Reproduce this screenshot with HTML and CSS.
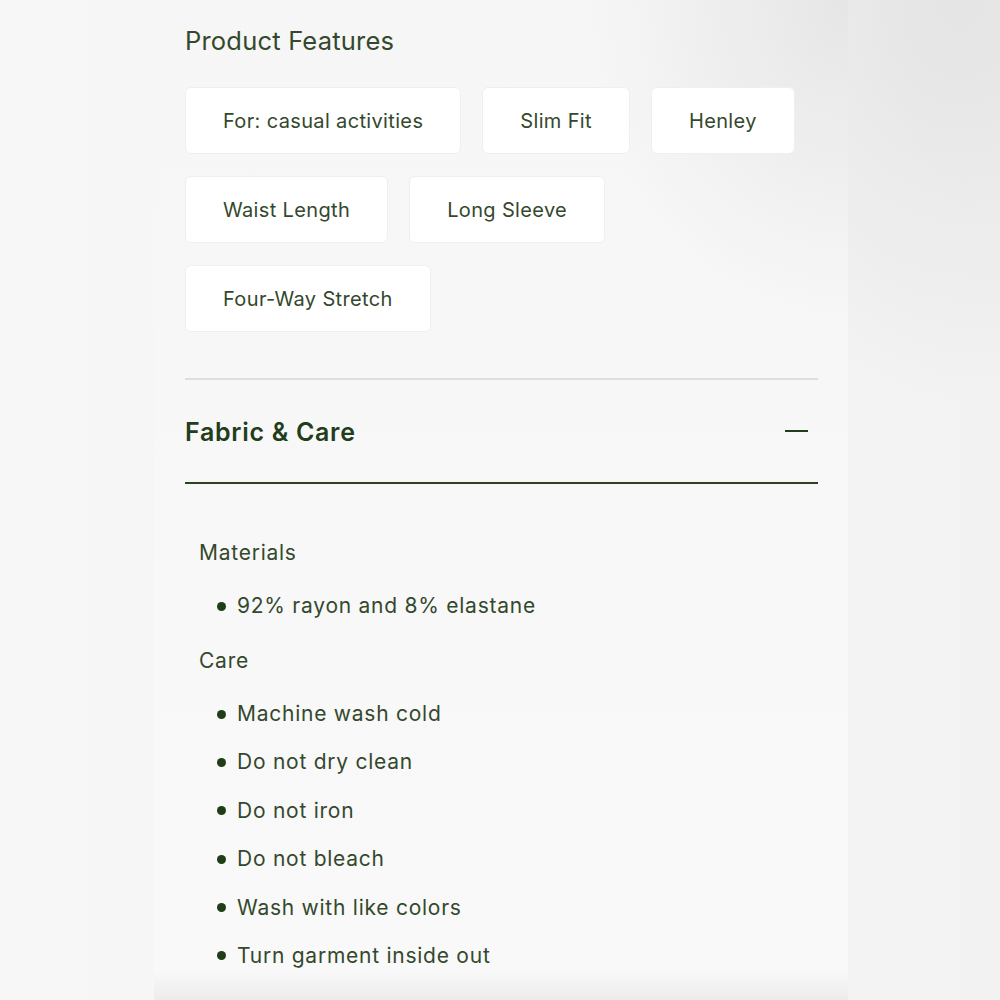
FILE: index.html
```html
<!DOCTYPE html>
<html>
<head>
<meta charset="utf-8">
<link rel="stylesheet" href="styles.css">
</head>
<body>
<div class="stage">
  <main class="panel">
    <h2 class="features-title">Product Features</h2>
    <div class="chips">
      <span class="chip">For: casual activities</span>
      <span class="chip">Slim Fit</span>
      <span class="chip">Henley</span>
      <span class="chip">Waist Length</span>
      <span class="chip">Long Sleeve</span>
      <span class="chip">Four-Way Stretch</span>
    </div>
    <hr class="divider">
    <div class="acc-head">
      <h3 class="acc-title">Fabric &amp; Care</h3>
      <span class="minus"></span>
    </div>
    <div class="acc-body">
      <p class="group">Materials</p>
      <ul class="list">
        <li>92% rayon and 8% elastane</li>
      </ul>
      <p class="group">Care</p>
      <ul class="list">
        <li>Machine wash cold</li>
        <li>Do not dry clean</li>
        <li>Do not iron</li>
        <li>Do not bleach</li>
        <li>Wash with like colors</li>
        <li>Turn garment inside out</li>
      </ul>
    </div>
  </main>
</div>
</body>
</html>
```
FILE: styles.css
```css
html, body {
  margin: 0;
  padding: 0;
  height: 1000px;
  overflow: hidden;
}
body {
  background:
    radial-gradient(ellipse 300px 400px at 960px 0px, #e4e4e4 0%, rgba(228,228,228,0) 100%),
    linear-gradient(90deg, #f7f7f7 0%, #f2f2f2 100%);
  font-family: Inter, "Noto Sans", sans-serif;
  color: #34482d;
}
.stage {
  display: flex;
  padding-left: 154px;
  height: 1000px;
}
.panel {
  width: 694px;
  box-sizing: border-box;
  padding: 24px 30px 0 31px;
  height: 1000px;
  background:
    radial-gradient(ellipse 260px 320px at 694px 0px, #e6e6e6 0%, rgba(230,230,230,0) 100%),
    linear-gradient(180deg, #f6f6f6 0%, #f8f8f8 60%, #f9f9f9 97%, #ececec 100%);
}
.features-title {
  margin: 0;
  font-size: 25.5px;
  letter-spacing: 0.2px;
  font-weight: 400;
  line-height: 34px;
  color: #34482d;
}
.chips {
  display: flex;
  flex-wrap: wrap;
  gap: 22px 21px;
  margin-top: 29px;
  width: 640px;
}
.chip {
  display: flex;
  align-items: center;
  height: 67px;
  box-sizing: border-box;
  padding: 0 37px;
  background: #ffffff;
  border: 1px solid #efefef;
  border-radius: 6px;
  font-size: 20px;
  letter-spacing: 0.35px;
  color: #34482d;
}
.divider {
  margin: 46px 0 0;
  border: 0;
  height: 2px;
  background: #dedede;
}
.acc-head {
  display: flex;
  align-items: center;
  justify-content: space-between;
  height: 102px;
  border-bottom: 2px solid #2a4323;
}
.acc-title {
  margin: 2px 0 0;
  font-size: 25px;
  letter-spacing: 0.7px;
  font-weight: 600;
  color: #233d1c;
}
.minus {
  width: 23px;
  height: 2px;
  background: #233d1c;
  margin-right: 10px;
}
.acc-body {
  padding: 53px 0 0 14px;
}
.group {
  margin: 0;
  font-size: 21px;
  letter-spacing: 0.75px;
  line-height: 32px;
  color: #34482d;
}
.list {
  list-style: none;
  margin: 0;
  padding: 21px 0 23px 18px;
  display: flex;
  flex-direction: column;
  gap: 16.4px;
}
.list li {
  display: flex;
  align-items: center;
  font-size: 21px;
  letter-spacing: 0.75px;
  line-height: 32px;
  color: #34482d;
}
.list li::before {
  content: "";
  width: 9px;
  height: 9px;
  border-radius: 50%;
  background: #1f3d17;
  margin-right: 11px;
  flex: none;
}
```
